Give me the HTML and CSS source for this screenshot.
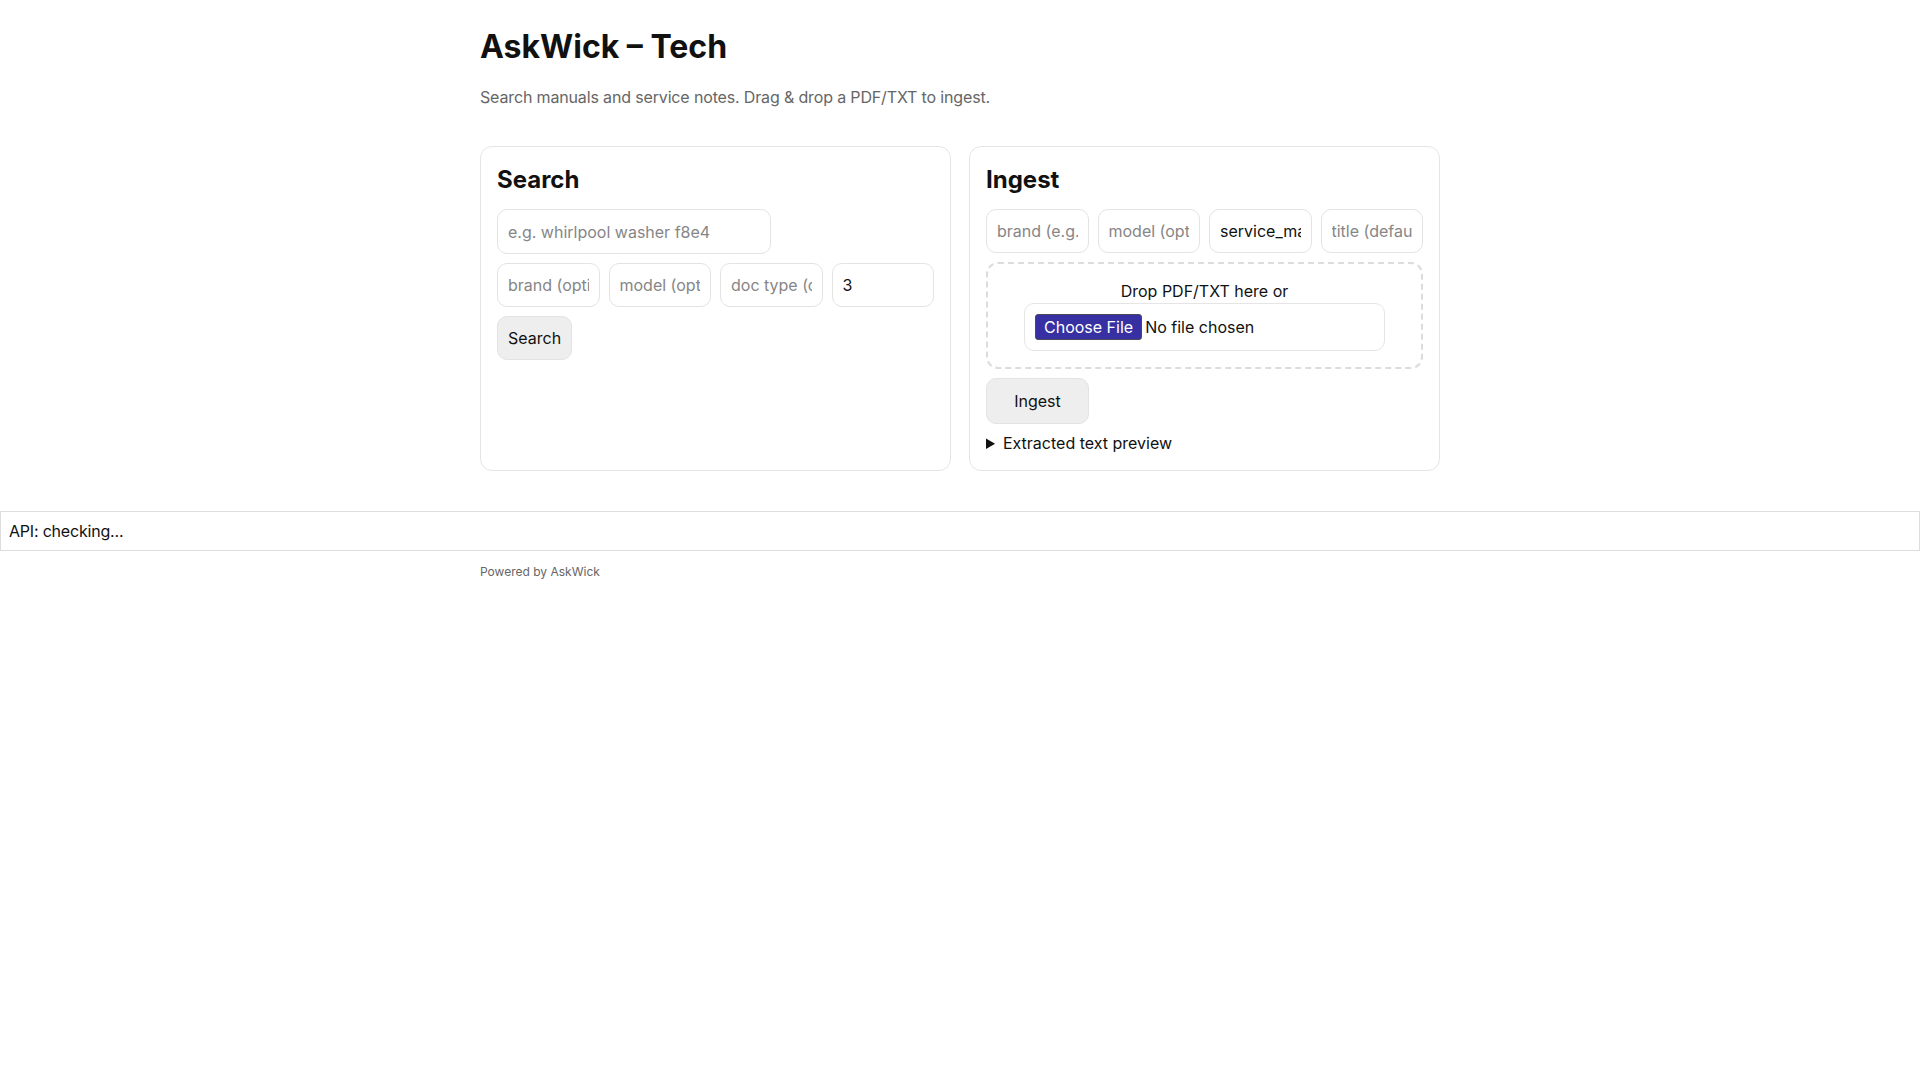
FILE: index.html
```html
<!DOCTYPE html>
<html lang="en">
<head>
    <meta charset="UTF-8">
    <meta name="viewport" content="width=device-width, initial-scale=1.0">
    <title>AskWick – Tech</title>
    <link rel="stylesheet" href="styles.css">
</head>
<body>
    <div class="wrap">
        <h1>AskWick – Tech</h1>
        <p class="lead">Search manuals and service notes. Drag &amp; drop a PDF/TXT to ingest.</p>

        <div class="panels">
            <!-- Search card -->
            <section class="card">
                <h2>Search</h2>
                <div class="stack">
                    <input class="field field-query" type="text" placeholder="e.g. whirlpool washer f8e4">
                    <div class="row">
                        <input class="field" type="text" placeholder="brand (optional)">
                        <input class="field" type="text" placeholder="model (optional)">
                        <input class="field" type="text" placeholder="doc type (optional)">
                        <input class="field" type="number" value="3">
                    </div>
                    <div>
                        <button class="btn">Search</button>
                    </div>
                </div>
            </section>

            <!-- Ingest card -->
            <section class="card">
                <h2>Ingest</h2>
                <div class="stack">
                    <div class="row">
                        <input class="field" type="text" placeholder="brand (e.g. whirlpool)">
                        <input class="field" type="text" placeholder="model (optional)">
                        <input class="field" type="text" value="service_manual">
                        <input class="field" type="text" placeholder="title (default: filename)">
                    </div>
                    <div class="drop">
                        <div>Drop PDF/TXT here or</div>
                        <input class="file" type="file" accept=".pdf,.txt">
                    </div>
                    <div>
                        <button class="btn btn-ingest">Ingest</button>
                    </div>
                    <details class="preview">
                        <summary>Extracted text preview</summary>
                        <pre></pre>
                    </details>
                </div>
            </section>
        </div>
    </div>

    <div class="status">API: checking...</div>

    <div class="wrap">
        <footer class="foot">Powered by AskWick</footer>
    </div>
</body>
</html>
```

FILE: styles.css
```css
body {
    margin: 0;
    font-family: Inter, "Noto Sans", Arial, sans-serif;
    font-size: 16px;
    color: #111;
    background: #fff;
}
.wrap {
    max-width: 960px;
    margin: 0 auto;
}
h1 {
    font-size: 32px;
    font-weight: 700;
    margin: 27px 0 21px;
}
.lead {
    color: #666;
    letter-spacing: -0.15px;
    margin: 0 0 39px;
}
.panels {
    display: grid;
    grid-template-columns: 1fr 1fr;
    gap: 18px;
}
.card {
    border: 1px solid #e5e5e5;
    border-radius: 12px;
    padding: 16px 16px 17px;
}
.card h2 {
    font-size: 24px;
    font-weight: 700;
    margin: 2px 0 15px;
}
.stack {
    display: flex;
    flex-direction: column;
    gap: 9px;
}
.row {
    display: grid;
    grid-template-columns: repeat(4, 1fr);
    gap: 9px;
}
.field {
    box-sizing: border-box;
    width: 100%;
    min-width: 0;
    font: inherit;
    line-height: 20px;
    color: #111;
    padding: 11px 10px;
    border: 1px solid #e3e3e3;
    border-radius: 10px;
    background: #fff;
}
.field::placeholder {
    color: #868686;
}
.field-query {
    width: 274px;
    padding: 12px 10px 11px;
}
.btn {
    font: inherit;
    line-height: 20px;
    color: #111;
    padding: 11px 10px;
    border: 1px solid #e3e3e3;
    border-radius: 10px;
    background: #eee;
    cursor: pointer;
}
.btn-ingest {
    width: 103px;
    padding: 12px 10px;
}
.drop {
    border: 2px dashed #dcdcdc;
    border-radius: 12px;
    padding: 17px 16px 16px;
    text-align: center;
}
.file {
    box-sizing: border-box;
    width: 361px;
    margin-top: 2px;
    font: inherit;
    padding: 10px;
    border: 1px solid #e5e5e5;
    border-radius: 10px;
    text-align: left;
}
.file::file-selector-button {
    font: inherit;
    color: #fff;
    background: #3730a3;
    border: 1px solid #4a4a5a;
    border-radius: 3px;
    padding: 2px 8px;
    margin-right: 3px;
}
.preview summary {
    cursor: pointer;
}
.status {
    margin-top: 40px;
    border: 1px solid #ddd;
    padding: 9px 8px;
    letter-spacing: -0.2px;
}
.foot {
    font-size: 12px;
    color: #666;
    padding-top: 13px;
}
```
